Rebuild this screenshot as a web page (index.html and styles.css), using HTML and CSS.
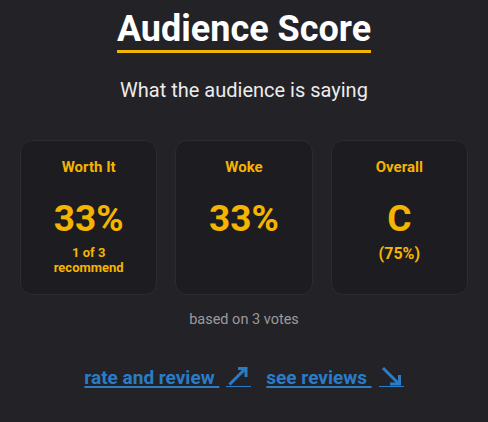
FILE: index.html
```html
<!DOCTYPE html>
<html lang="en">
<head>
<meta charset="utf-8">
<title>Audience Score</title>
<link rel="stylesheet" href="styles.css">
</head>
<body>
<section class="score">
  <h1 class="title">Audience Score</h1>
  <p class="subtitle">What the audience is saying</p>
  <div class="cards">
    <div class="card">
      <div class="label">Worth It</div>
      <div class="value">33%</div>
      <div class="note">1 of 3<br>recommend</div>
    </div>
    <div class="card">
      <div class="label">Woke</div>
      <div class="value">33%</div>
    </div>
    <div class="card">
      <div class="label">Overall</div>
      <div class="value">C</div>
      <div class="pct">(75%)</div>
    </div>
  </div>
  <p class="votes">based on 3 votes</p>
  <div class="links">
    <a class="link" href="#"><span class="text">rate and review </span><span class="arrow"><svg width="25" height="20" viewBox="0 0 25 20"><path d="M3.5 18.5 L19 3" stroke="currentColor" stroke-width="3" fill="none"/><path d="M12 2.5 H20 V11" stroke="currentColor" stroke-width="3" fill="none"/></svg></span></a>
    <a class="link" href="#"><span class="text">see reviews </span><span class="arrow"><svg width="25" height="20" viewBox="0 0 25 20"><path d="M4 2 L19.5 17.5" stroke="currentColor" stroke-width="3" fill="none"/><path d="M20.5 9 V18 H11" stroke="currentColor" stroke-width="3" fill="none"/></svg></span></a>
  </div>
</section>
</body>
</html>
```
FILE: styles.css
```css
html, body {
  margin: 0;
  padding: 0;
  background: #232227;
}
body {
  font-family: Roboto, "Liberation Sans", sans-serif;
  color: #f2f2f2;
}
.score {
  width: 488px;
  height: 422px;
  display: flex;
  flex-direction: column;
  align-items: center;
  padding-top: 8px;
  box-sizing: border-box;
}
.title {
  margin: 0;
  font-size: 36px;
  font-weight: 700;
  color: #ffffff;
  line-height: 42px;
  border-bottom: 3px solid #f5b400;
}
.subtitle {
  margin: 25px 0 0;
  font-size: 20px;
  line-height: 24px;
  color: #ececec;
}
.cards {
  margin-top: 38px;
  width: 448px;
  display: grid;
  grid-template-columns: repeat(3, 1fr);
  gap: 18px;
}
.card {
  height: 155px;
  box-sizing: border-box;
  background: #1d1c21;
  border: 1px solid #2c2b31;
  border-radius: 12px;
  display: flex;
  flex-direction: column;
  align-items: center;
  color: #f5b400;
  font-weight: 700;
  padding-top: 16px;
}
.label {
  font-size: 15px;
  line-height: 20px;
}
.value {
  margin-top: 20px;
  font-size: 37px;
  line-height: 43px;
}
.note {
  font-size: 13px;
  line-height: 15px;
  text-align: center;
  margin-top: 5px;
}
.pct {
  font-size: 16px;
  line-height: 20px;
  margin-top: 4px;
}
.votes {
  margin: 17px 0 0;
  font-size: 14.5px;
  line-height: 16px;
  color: #9b9b9e;
}
.links {
  margin-top: 38px;
  display: flex;
  gap: 15px;
}
.link {
  display: flex;
  align-items: flex-end;
  color: #2a7cc7;
  font-size: 19px;
  line-height: 22px;
  font-weight: 700;
  text-decoration: none;
}
.text {
  white-space: pre;
  text-decoration: underline;
  text-decoration-thickness: 1.5px;
  text-underline-offset: 2px;
}
.arrow {
  display: block;
  margin-left: 7px;
  margin-bottom: 2px;
  width: 25px;
  height: 20px;
  border-bottom: 1.5px solid #2a7cc7;
}
.arrow svg {
  display: block;
}
```
